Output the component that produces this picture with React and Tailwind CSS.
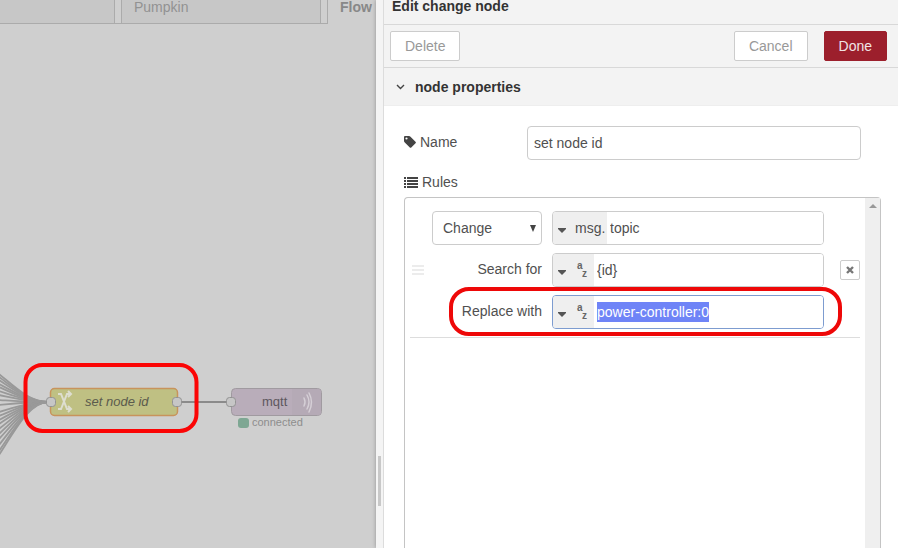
import { useEffect, useRef } from "react";

const WIRE_STARTS = [350, 353, 356, 360, 363, 367, 371, 376, 381, 388, 392, 396, 400, 405, 410, 415, 421, 427, 431];

function Wires() {
  return (
    <g fill="none" stroke="#999" strokeWidth="1.800">
      {WIRE_STARTS.map((y) => (
        <path key={y} d={`M-1 ${y}C16 ${y + (378 - y) * 0.5} 30 378 48 378`} />
      ))}
    </g>
  );
}

function Canvas() {
  return (
    <svg className="block w-full flex-1 font-[Liberation_Sans,Arial,sans-serif]" role="img" aria-label="Flow">
      <Wires />
      <path d="M178 378H231" stroke="#8b8b8b" strokeWidth="2" />
      <rect x="50.500" y="364.500" width="127" height="27" rx="4" fill="#bfc083" stroke="#c8935c" strokeWidth="1.500" />
      <g fill="none" stroke="#deded0" strokeWidth="2">
        <path d="M58 370h3l6 15h3M58 385h3l6-15h3" />
        <path d="M68 367l3 3-3 3M68 382l3 3-3 3" />
      </g>
      <text x="85" y="382" fontSize="13" fontStyle="italic" fill="#5b5b4d">set node id</text>
      <rect x="231.500" y="364.500" width="90" height="27" rx="4" fill="#b9adba" stroke="#a09aa0" />
      <path d="M292 365h26q3 0 3 3v20q0 3-3 3h-26z" fill="#b5aab6" />
      <text x="262" y="382" fontSize="13" fill="#5d575e">mqtt</text>
      <g fill="none" stroke="#d5cfd6" strokeWidth="1.500" strokeLinecap="round">
        <path d="M304 374q2 4 0 8M307 371q4 7 0 14M309 369q5 9 0 19" />
      </g>
      <g fill="#c6c6c6" stroke="#939393">
        <rect x="46.500" y="373.500" width="9" height="9" rx="3" />
        <rect x="172.500" y="373.500" width="9" height="9" rx="3" />
        <rect x="226.500" y="373.500" width="9" height="9" rx="3" />
      </g>
      <rect x="238" y="394" width="11" height="10" rx="3" fill="#7ea793" />
      <text x="252" y="402" fontSize="11" fill="#8d8d8d">connected</text>
      <rect x="25.500" y="341" width="171" height="66" rx="17" fill="none" stroke="#fb0505" strokeWidth="4" />
    </svg>
  );
}

function Workspace() {
  return (
    <main className="flex min-w-0 flex-1 flex-col overflow-hidden bg-[#cfcfcf]">
      <nav className="flex h-6 shrink-0 text-[#929292]">
        <div className="w-[115px] shrink-0 border-r border-b border-[#ababab] bg-[#c7c7c7]" />
        <div className="w-1.5 shrink-0 border-b border-[#ababab]" />
        <a href="#pumpkin" className="w-[200px] shrink-0 border-x border-b border-[#ababab] bg-[#c7c7c7] pl-3 leading-[14px]">Pumpkin</a>
        <div className="w-[7px] shrink-0 border-r border-b border-[#ababab]" />
        <a href="#flow" className="shrink-0 pl-3 leading-[14px] font-bold text-[#888]">Flow</a>
      </nav>
      <Canvas />
    </main>
  );
}

function Caret() {
  return (
    <svg width="8" height="5" viewBox="0 0 8 5" className="mt-1 shrink-0" aria-hidden="true">
      <path d="M0 0h8v1L4 5 0 1z" fill="#555" />
    </svg>
  );
}

function StringType() {
  return (
    <span className="relative block h-[18px] w-2.5 text-[10px] leading-[10px] font-bold text-[#666]" aria-hidden="true">
      <span className="absolute top-0 left-0">a</span>
      <span className="absolute right-0 bottom-0">z</span>
    </span>
  );
}

function TypedInput({ type, active, ...props }) {
  return (
    <div className={`flex h-[34px] w-[272px] overflow-hidden rounded border ${active ? "border-[#7d9cd0]" : "border-[#ccc]"}`}>
      <button type="button" aria-label="Value type" className={`flex shrink-0 items-center bg-[#efefef] pl-[5px] ${type ? "w-[54px] gap-[9px]" : "w-[41px] gap-[11px]"}`}>
        <Caret />
        {type || <StringType />}
      </button>
      <input className="min-w-0 flex-1 bg-white px-[3px] outline-none selection:bg-[#6f84f7] selection:text-white" {...props} />
    </div>
  );
}

function Rule() {
  const replaceRef = useRef(null);
  useEffect(() => {
    replaceRef.current.focus();
    replaceRef.current.select();
  }, []);
  return (
    <li className="flex items-center border-b border-[#ddd] pt-[5px] pb-2">
      <svg width="12" height="10" viewBox="0 0 12 10" className="mx-0.5 shrink-0" aria-hidden="true">
        <path d="M0 0h12v2H0zM0 4h12v2H0zM0 8h12v2H0z" fill="#ececec" />
      </svg>
      <div className="ml-1.5 flex flex-col gap-2">
        <div className="flex gap-2.5">
          <div className="relative w-[110px]">
            <select aria-label="Action" className="h-[34px] w-full appearance-none rounded border border-[#ccc] bg-white px-2.5">
              <option>Change</option>
            </select>
            <svg width="6" height="7" viewBox="0 0 6 7" className="pointer-events-none absolute top-3.5 right-1.5" aria-hidden="true">
              <path d="M0 0h6L3 7z" fill="#444" />
            </svg>
          </div>
          <TypedInput type="msg." aria-label="Property" defaultValue="topic" />
        </div>
        <div className="flex gap-2.5">
          <label htmlFor="search" className="w-[110px] text-right leading-8">Search for</label>
          <TypedInput id="search" defaultValue="{id}" />
        </div>
        <div className="relative flex gap-2.5">
          <label htmlFor="replace" className="w-[110px] text-right leading-8">Replace with</label>
          <TypedInput id="replace" active ref={replaceRef} defaultValue="power-controller:0" />
          <div className="pointer-events-none absolute -top-2 -right-[18px] -bottom-[7px] left-[17px] rounded-[20px] border-4 border-[#ee0808]" />
        </div>
      </div>
      <button type="button" aria-label="Remove rule" className="ml-auto flex h-5 w-5 items-center justify-center rounded-xs border border-[#ccc] bg-white">
        <svg width="8" height="8" viewBox="0 0 8 8" aria-hidden="true">
          <path d="M1 1l6 6M7 1l-6 6" stroke="#777" strokeWidth="2.400" />
        </svg>
      </button>
    </li>
  );
}

function Editor() {
  return (
    <aside className="flex w-[522px] shrink-0 shadow-[0_0_4px_rgba(0,0,0,0.3)]">
      <div className="flex w-2 shrink-0 flex-col border-r border-[#dcdcdc] bg-[#f4f4f4] pt-[456px] pl-0.5">
        <div className="h-[50px] w-[3px] bg-[#c8c8c8]" />
      </div>
      <section className="flex min-w-0 flex-1 flex-col bg-white">
        <h1 className="h-[25px] shrink-0 border-b border-[#d8d8d8] bg-[#f3f3f3] pl-2 leading-3 font-bold text-[#333]">Edit change node</h1>
        <div className="flex h-[43px] shrink-0 items-center border-b border-[#d8d8d8] bg-[#f3f3f3] pr-[11px] pl-1.5">
          <button type="button" className="h-[30px] rounded-xs border border-[#ccc] bg-white px-3.5 text-[#999]">Delete</button>
          <button type="button" className="ml-auto h-[30px] rounded-xs border border-[#ccc] bg-white px-3.5 text-[#999]">Cancel</button>
          <button type="button" className="ml-4 h-[30px] rounded-xs border border-[#9c1f2c] bg-[#9c1f2c] px-3.5 text-[#f0e4e5]">Done</button>
        </div>
        <h2 className="flex h-[38px] shrink-0 items-center gap-2.5 border-b border-[#eee] bg-[#f3f3f3] pl-3 font-bold text-[#333]">
          <svg width="9" height="6" viewBox="0 0 9 6" aria-hidden="true">
            <path d="M1 1l3.500 3.500L8 1" fill="none" stroke="#444" strokeWidth="1.400" />
          </svg>
          node properties
        </h2>
        <div className="flex min-h-0 flex-1 flex-col pt-5 pr-[17px] pl-5">
          <div className="flex items-start pr-5">
            <label htmlFor="name" className="flex w-[123px] shrink-0 items-center gap-1 leading-8">
              <svg width="12" height="12" viewBox="0 0 12 12" aria-hidden="true">
                <path fillRule="evenodd" d="M0 1q0-1 1-1h4q.8 0 1.500.700l5 5q.8.800 0 1.600L7.300 11.500q-.8.700-1.500 0l-5-5Q0 5.800 0 5zM2.500 1.400a1.100 1.100 0 1 0 0 2.200a1.100 1.100 0 1 0 0-2.200z" fill="#444" />
              </svg>
              Name
            </label>
            <input id="name" defaultValue="set node id" className="h-[34px] min-w-0 flex-1 rounded border border-[#ccc] bg-white px-1.5" />
          </div>
          <div className="mt-3 flex items-center gap-1 leading-5">
            <svg width="14" height="11" viewBox="0 0 14 11" aria-hidden="true">
              <path d="M0 0h2v2H0zM3 0h11v2H3zM0 3h2v2H0zM3 3h11v2H3zM0 6h2v2H0zM3 6h11v2H3zM0 9h2v2H0zM3 9h11v2H3z" fill="#444" />
            </svg>
            Rules
          </div>
          <div className="mt-[5px] flex min-h-0 flex-1 rounded-t border border-b-0 border-[#c4c4c4]">
            <ol className="min-w-0 flex-1 px-[5px] pt-2">
              <Rule />
            </ol>
            <div className="flex w-[15px] shrink-0 justify-center bg-[#efefef] pt-1.5">
              <svg width="8" height="4" viewBox="0 0 8 4" aria-hidden="true">
                <path d="M0 4h8L4 0z" fill="#999" />
              </svg>
            </div>
          </div>
        </div>
      </section>
    </aside>
  );
}

export default function App() {
  return (
    <div className="flex h-screen overflow-hidden font-[Liberation_Sans,Arial,sans-serif] text-sm text-[#505050]">
      <Workspace />
      <Editor />
    </div>
  );
}
